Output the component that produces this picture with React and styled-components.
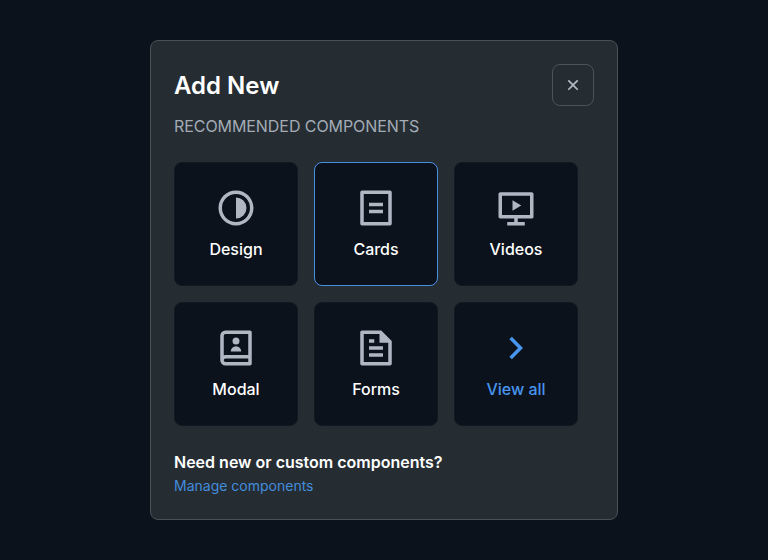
import React from "react";
import styled, { createGlobalStyle } from "styled-components";

const GlobalStyle = createGlobalStyle`
  *, *::before, *::after { box-sizing: border-box; }
  body {
    margin: 0;
    background: #0c121c;
    font-family: Inter, "Liberation Sans", sans-serif;
  }
`;

const Page = styled.main`
  display: flex;
  align-items: center;
  justify-content: center;
  height: 560px;
`;

const Dialog = styled.section`
  width: 468px;
  height: 480px;
  padding: 23px;
  background: #252d33;
  border: 1px solid #465057;
  border-radius: 8px;
`;

const Header = styled.header`
  display: flex;
  align-items: center;
  justify-content: space-between;
  height: 42px;
`;

const Title = styled.h1`
  margin: 0;
  padding-top: 2px;
  font-size: 24px;
  line-height: 32px;
  font-weight: 600;
  color: #fff;
`;

const CloseButton = styled.button`
  display: flex;
  align-items: center;
  justify-content: center;
  width: 42px;
  height: 42px;
  padding: 0;
  background: transparent;
  border: 1px solid #4b535b;
  border-radius: 8px;
  color: #b3bac4;
`;

const Subtitle = styled.p`
  margin: 8px 0 24px;
  font-size: 16px;
  line-height: 24px;
  letter-spacing: -0.07px;
  color: #a3abb5;
`;

const Grid = styled.div`
  display: grid;
  grid-template-columns: repeat(3, 124px);
  grid-auto-rows: 124px;
  gap: 16px;
`;

const Tile = styled.button`
  display: flex;
  flex-direction: column;
  align-items: center;
  gap: 8px;
  padding: 24px 0 0;
  background: #0c121c;
  border: 1px solid ${(p) => (p.$active ? "#4690e2" : "#111922")};
  border-radius: 8px;
  color: ${(p) => (p.$link ? "#4795ee" : "#b0b7c3")};
  font-family: inherit;
`;

const TileLabel = styled.span`
  font-size: 16px;
  line-height: 24px;
  font-weight: 500;
  color: ${(p) => (p.$link ? "#4795ee" : "#fff")};
`;

const IconSvg = styled.svg`
  display: block;
  width: ${(p) => p.$size}px;
  height: ${(p) => p.$size}px;
  fill: currentColor;
`;

const Question = styled.h2`
  margin: 24px 0 0;
  font-size: 16px;
  line-height: 24px;
  font-weight: 600;
  color: #fff;
`;

const ManageLink = styled.a`
  display: block;
  width: max-content;
  font-size: 14px;
  line-height: 24px;
  color: #448cdc;
  text-decoration: none;
`;

const paths = {
  close:
    "M12 10.586l4.95-4.95 1.414 1.414-4.95 4.95 4.95 4.95-1.414 1.414-4.95-4.95-4.95 4.95-1.414-1.414 4.95-4.95-4.95-4.95L7.05 5.636z",
  design:
    "M12 22C6.477 22 2 17.523 2 12S6.477 2 12 2s10 4.477 10 10-4.477 10-10 10zm0-2a8 8 0 1 0 0-16 8 8 0 0 0 0 16zm0-2V6a6 6 0 1 1 0 12z",
  cards:
    "M20 22H4a1 1 0 0 1-1-1V3a1 1 0 0 1 1-1h16a1 1 0 0 1 1 1v18a1 1 0 0 1-1 1zm-1-2V4H5v16h14zM8 9h8v2H8V9zm0 4h8v2H8v-2z",
  videos:
    "M13 18v2h4v2H7v-2h4v-2H2.992A.998.998 0 0 1 2 16.992V4.008C2 3.451 2.455 3 2.992 3h18.016c.548 0 .992.449.992 1.007v12.985c0 .557-.455 1.008-.992 1.008H13zM4 5v11h16V5H4zm6 2.5l5 3-5 3v-6z",
  modal:
    "M20 22H6a3 3 0 0 1-3-3V5a3 3 0 0 1 3-3h14a1 1 0 0 1 1 1v18a1 1 0 0 1-1 1zm-1-2v-2H6a1 1 0 0 0 0 2h13zM5 16.17A3 3 0 0 1 6 16h13V4H6a1 1 0 0 0-1 1v11.17zM12 10a2 2 0 1 1 0-4 2 2 0 0 1 0 4zm-3 4a3 3 0 0 1 6 0H9z",
  forms:
    "M21 8v12.993A1 1 0 0 1 20.007 22H3.993A.993.993 0 0 1 3 21.008V2.992C3 2.455 3.449 2 4.002 2h10.995L21 8zm-2 1h-5V4H5v16h14V9zM8 7h3v2H8V7zm0 4h8v2H8v-2zm0 4h8v2H8v-2z",
  all: "M13.172 12l-4.95-4.95 1.414-1.414L16 12l-6.364 6.364-1.414-1.414z",
};

const tiles = [
  { icon: "design", label: "Design" },
  { icon: "cards", label: "Cards", active: true },
  { icon: "videos", label: "Videos" },
  { icon: "modal", label: "Modal" },
  { icon: "forms", label: "Forms" },
  { icon: "all", label: "View all", link: true },
];

function Icon({ name, size = 42 }) {
  return (
    <IconSvg viewBox="0 0 24 24" $size={size} aria-hidden="true">
      <path fillRule="evenodd" d={paths[name]} />
    </IconSvg>
  );
}

export default function App() {
  return (
    <>
      <GlobalStyle />
      <Page>
        <Dialog role="dialog" aria-label="Add New">
          <Header>
            <Title>Add New</Title>
            <CloseButton aria-label="Close">
              <Icon name="close" size={20} />
            </CloseButton>
          </Header>
          <Subtitle>RECOMMENDED COMPONENTS</Subtitle>
          <Grid>
            {tiles.map((t) => (
              <Tile key={t.icon} $active={t.active} $link={t.link}>
                <Icon name={t.icon} />
                <TileLabel $link={t.link}>{t.label}</TileLabel>
              </Tile>
            ))}
          </Grid>
          <Question>Need new or custom components?</Question>
          <ManageLink>Manage components</ManageLink>
        </Dialog>
      </Page>
    </>
  );
}
